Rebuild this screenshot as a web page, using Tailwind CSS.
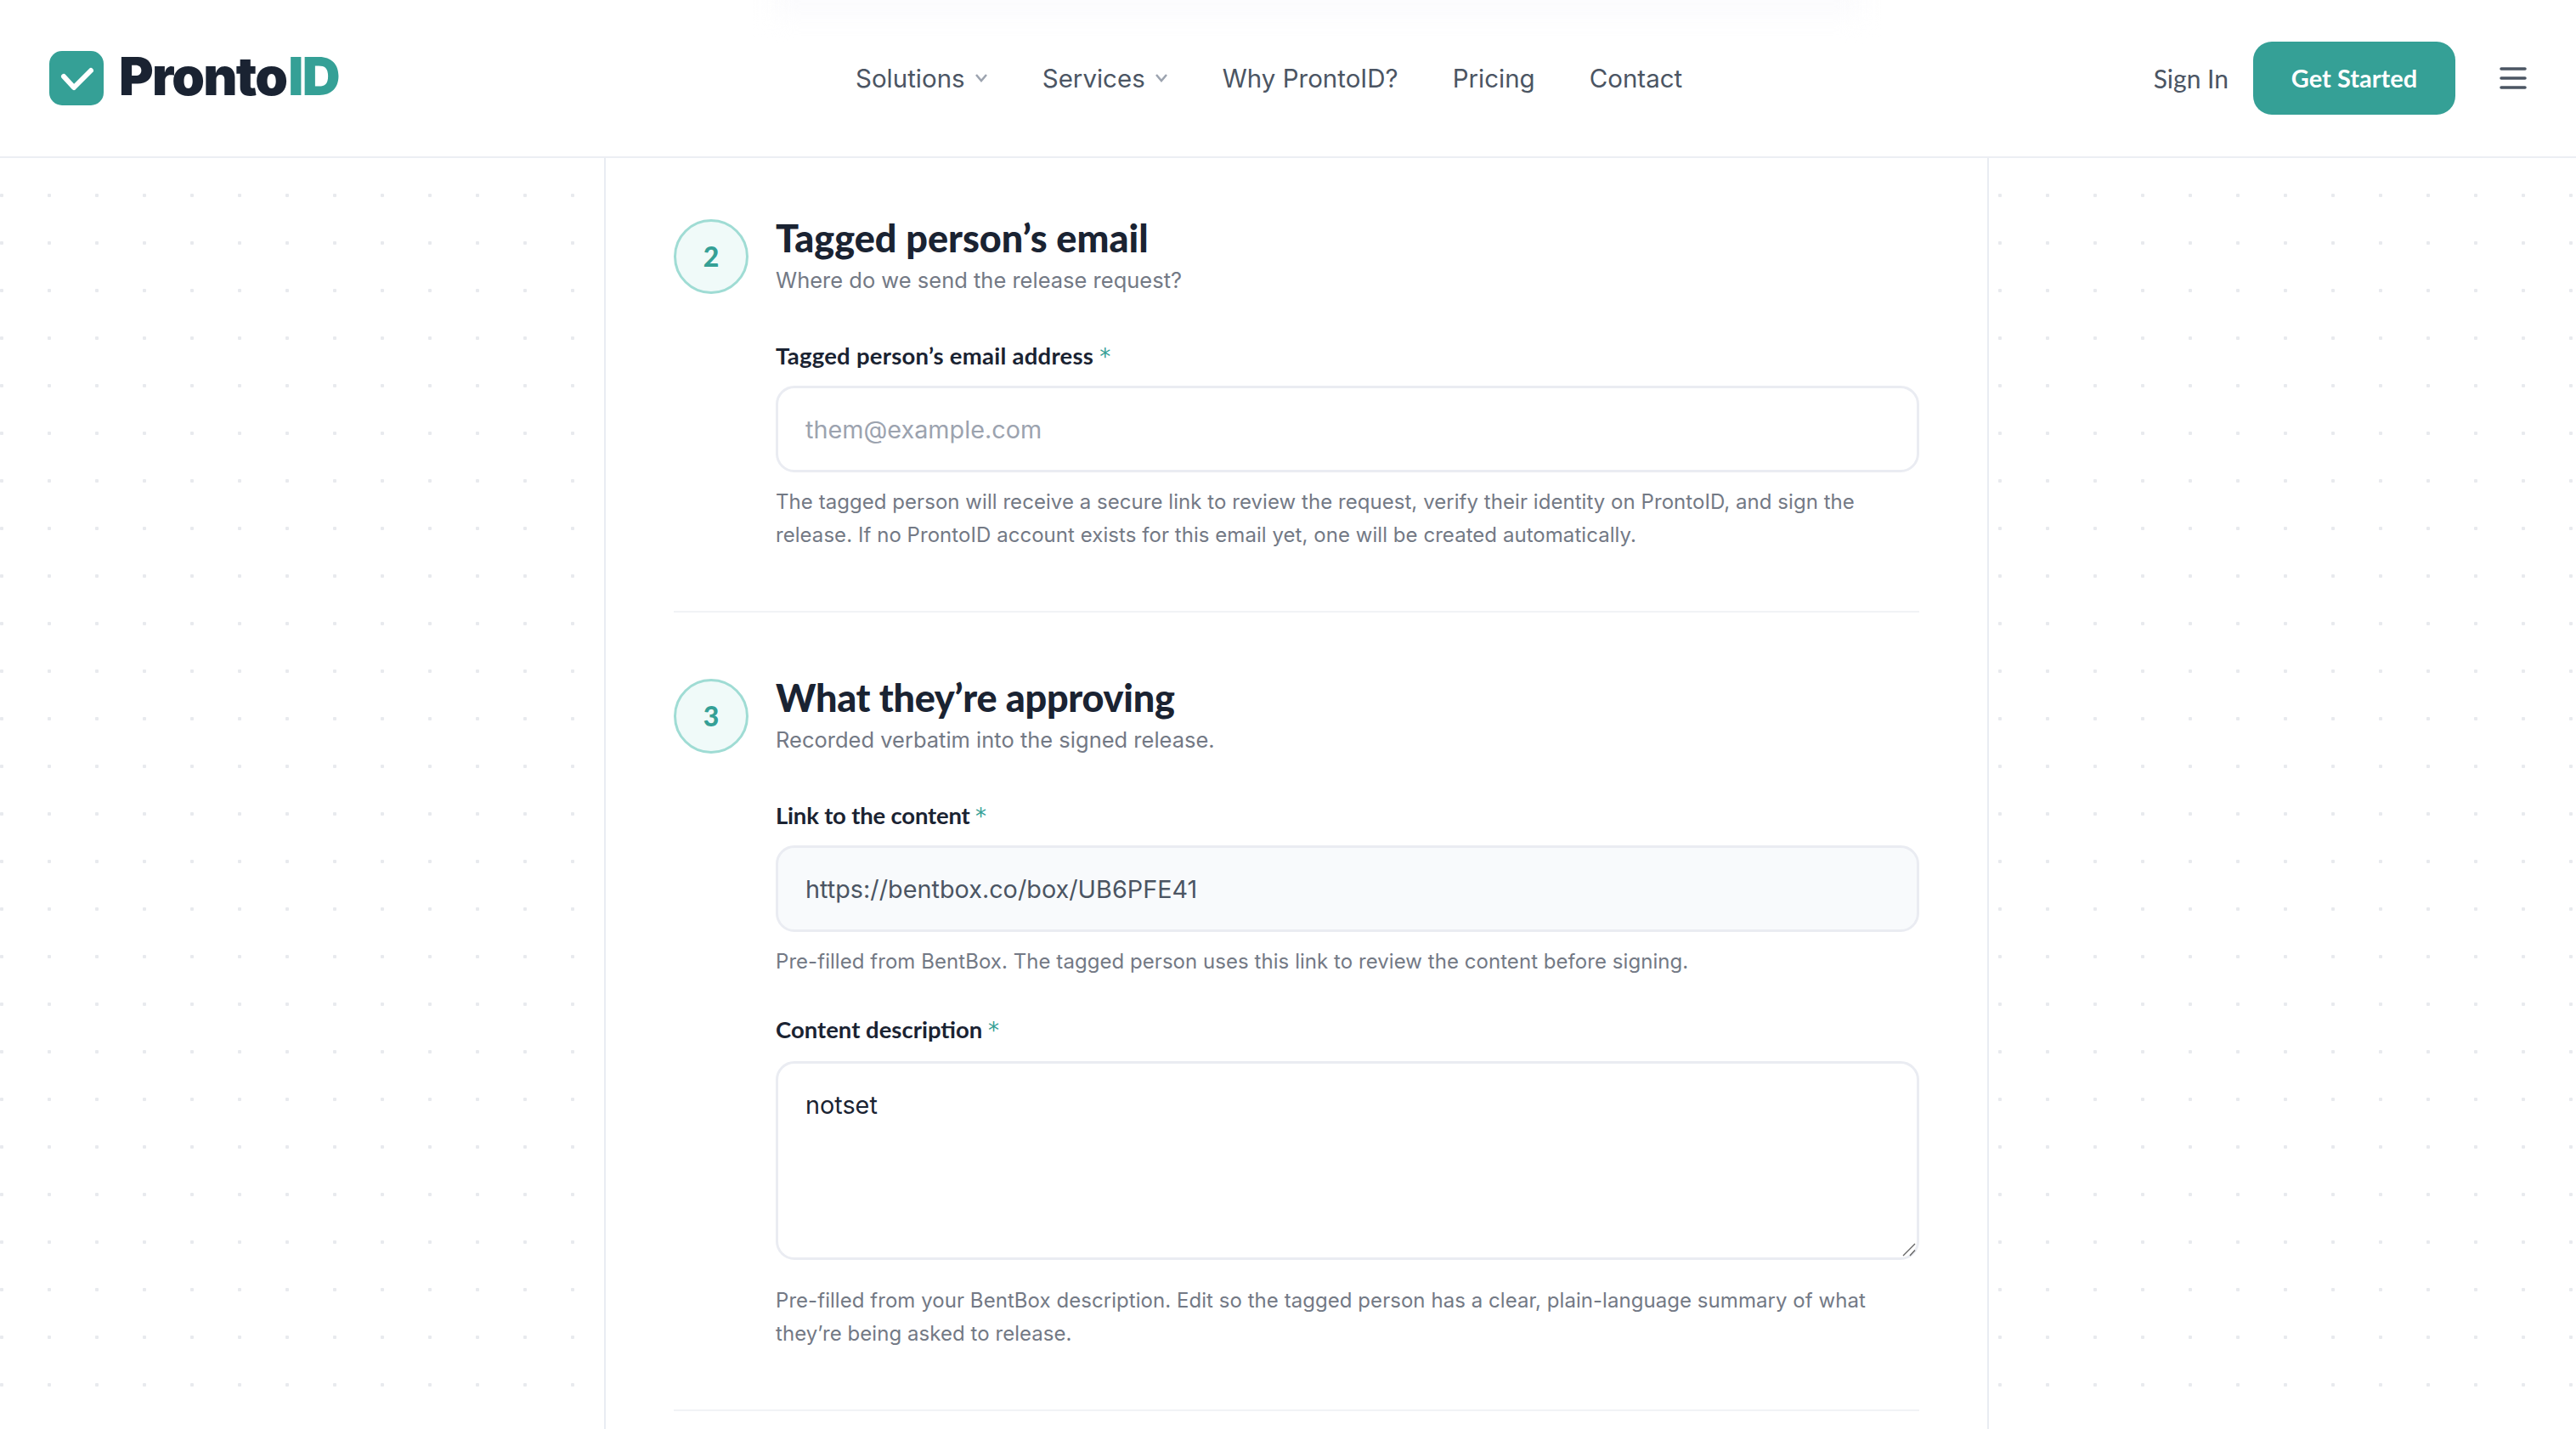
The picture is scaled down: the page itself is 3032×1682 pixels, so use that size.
<!DOCTYPE html>
<html lang="en">
<head>
    <meta charset="UTF-8">
    <meta name="viewport" content="width=device-width, initial-scale=1.0">
    <title>ProntoID - Request a release</title>
    <script src="https://cdn.jsdelivr.net/npm/@tailwindcss/browser@4"></script>
</head>
<body class="bg-white font-['Inter',sans-serif]">
    <div class="h-[1682px] overflow-hidden flex flex-col bg-[radial-gradient(circle_at_2px_6px,#e8eaee_2px,transparent_2.5px)] bg-[size:56px_56px]">
        <!-- Header -->
        <header class="relative h-[186px] shrink-0 bg-white border-b-2 border-[#eceef3] flex items-center overflow-hidden">
            <div class="absolute left-[910px] top-[-40px] w-[1280px] h-[60px] bg-[#fbfbfd] blur-[14px]"></div>
            <div class="relative flex items-center ml-[58px] w-[340px] gap-[18px]">
                <svg class="w-[64px] h-[64px] shrink-0" viewBox="0 0 64 64">
                    <rect width="64" height="64" rx="15" fill="#35a096"/>
                    <path d="M17 30 L29 43 L49 23" fill="none" stroke="#fff" stroke-width="6" stroke-linecap="round" stroke-linejoin="round"/>
                </svg>
                <span class="mb-[4px] text-[62px] leading-none font-black tracking-[-1.7px] text-[#1a2332] whitespace-nowrap">Pronto<span class="ml-[2px] text-[#35a096]">ID</span></span>
            </div>
            <nav class="relative flex items-center gap-16 ml-[609px] text-[29.5px] text-[#4b5563]">
                <a class="flex items-center gap-[11px]">Solutions
                    <svg class="w-[16px] h-[12px]" viewBox="0 0 16 12"><path d="M2 2 L8 9 L14 2" fill="none" stroke="#9ca3af" stroke-width="2.5"/></svg>
                </a>
                <a class="flex items-center gap-[11px]">Services
                    <svg class="w-[16px] h-[12px]" viewBox="0 0 16 12"><path d="M2 2 L8 9 L14 2" fill="none" stroke="#9ca3af" stroke-width="2.5"/></svg>
                </a>
                <a>Why ProntoID?</a>
                <a>Pricing</a>
                <a>Contact</a>
            </nav>
            <div class="relative flex items-center ml-auto mr-[58px]">
                <a class="text-[30px] text-[#4b5563] font-['Lato',sans-serif] mr-[29px]">Sign In</a>
                <a class="w-[238px] h-[86px] rounded-[22px] bg-[#35a096] text-white text-[29px] font-bold font-['Lato',sans-serif] flex items-center justify-center">Get Started</a>
                <svg class="w-[32px] h-[28px] ml-[52px]" viewBox="0 0 32 28">
                    <path d="M2 3 H30 M2 14 H30 M2 25 H30" fill="none" stroke="#4b5563" stroke-width="3.5" stroke-linecap="round"/>
                </svg>
            </div>
        </header>

        <!-- Form card -->
        <main class="ml-[711px] w-[1630px] flex-1 bg-white border-x-2 border-[#e9ecf2] px-20 pt-[72px]">
            <section class="border-b-2 border-[#f1f3f6] h-[463px]">
                <div class="flex gap-8">
                    <div class="w-[88px] h-[88px] shrink-0 rounded-full border-[3px] border-[#9fdcd4] bg-[#f0faf9] flex items-center justify-center text-[32px] font-black text-[#35a096] font-['Lato',sans-serif]">2</div>
                    <div class="flex-1 min-w-0">
                        <h2 class="text-[45px] leading-[44px] font-black text-[#1a2332] font-['Lato',sans-serif]">Tagged person’s email</h2>
                        <p class="text-[25.5px] leading-[40px] mt-[8px] text-[#737985]">Where do we send the release request?</p>
                        <label class="block mt-[52px] text-[27.5px] leading-[34px] tracking-[0.25px] font-bold text-[#1a2332] font-['Lato',sans-serif]">Tagged person’s email address <span class="text-[26px] font-normal text-[#35a096] font-['DejaVu_Sans',sans-serif]">*</span></label>
                        <input class="block w-full h-[102px] mt-[17px] px-8 rounded-[22px] border-[3px] border-[#eaecf2] bg-white text-[28.8px] placeholder:text-[#9ca3af]" placeholder="them@example.com">
                        <p class="text-[24px] leading-[39px] tracking-[0.05px] mt-[15px] text-[#737985] whitespace-nowrap">The tagged person will receive a secure link to review the request, verify their identity on ProntoID, and sign the<br>release. If no ProntoID account exists for this email yet, one will be created automatically.</p>
                    </div>
                </div>
            </section>
            <section class="border-b-2 border-[#f1f3f6] pt-[78px] h-[940px]">
                <div class="flex gap-8">
                    <div class="w-[88px] h-[88px] shrink-0 rounded-full border-[3px] border-[#9fdcd4] bg-[#f0faf9] flex items-center justify-center text-[32px] font-black text-[#35a096] font-['Lato',sans-serif]">3</div>
                    <div class="flex-1 min-w-0">
                        <h2 class="text-[45px] leading-[44px] tracking-[-0.27px] font-black text-[#1a2332] font-['Lato',sans-serif]">What they’re approving</h2>
                        <p class="text-[25.5px] leading-[40px] mt-[8px] text-[#737985]">Recorded verbatim into the signed release.</p>
                        <label class="block mt-[52px] text-[27.5px] leading-[34px] tracking-[-0.2px] font-bold text-[#1a2332] font-['Lato',sans-serif]">Link to the content <span class="text-[26px] font-normal text-[#35a096] font-['DejaVu_Sans',sans-serif]">*</span></label>
                        <input class="block w-full h-[102px] mt-[17px] px-8 rounded-[22px] border-[3px] border-[#eaecf2] bg-[#f8fafc] text-[28.8px] text-[#4b5563]" value="https://bentbox.co/box/UB6PFE41" readonly>
                        <p class="text-[24px] leading-[39px] tracking-[0.05px] mt-[15px] text-[#737985] whitespace-nowrap">Pre-filled from BentBox. The tagged person uses this link to review the content before signing.</p>
                        <label class="block mt-[44px] text-[27.5px] leading-[34px] font-bold text-[#1a2332] font-['Lato',sans-serif]">Content description <span class="text-[26px] font-normal text-[#35a096] font-['DejaVu_Sans',sans-serif]">*</span></label>
                        <div class="relative mt-[19px]">
                            <textarea class="block w-full h-[234px] px-8 py-[29px] rounded-[22px] border-[3px] border-[#eaecf2] bg-white text-[28.8px] leading-[40px] text-[#1a2332] resize-none">notset</textarea>
                            <svg class="absolute right-[4px] bottom-[4px] w-[16px] h-[16px]" viewBox="0 0 16 16">
                                <path d="M1 15 L15 1 M9 15 L15 8.5" fill="none" stroke="#666" stroke-width="1.4"/>
                            </svg>
                        </div>
                        <p class="text-[24px] leading-[39px] tracking-[0.05px] mt-[28px] text-[#737985] whitespace-nowrap">Pre-filled from your BentBox description. Edit so the tagged person has a clear, plain-language summary of what<br>they’re being asked to release.</p>
                    </div>
                </div>
            </section>
        </main>
    </div>
</body>
</html>
